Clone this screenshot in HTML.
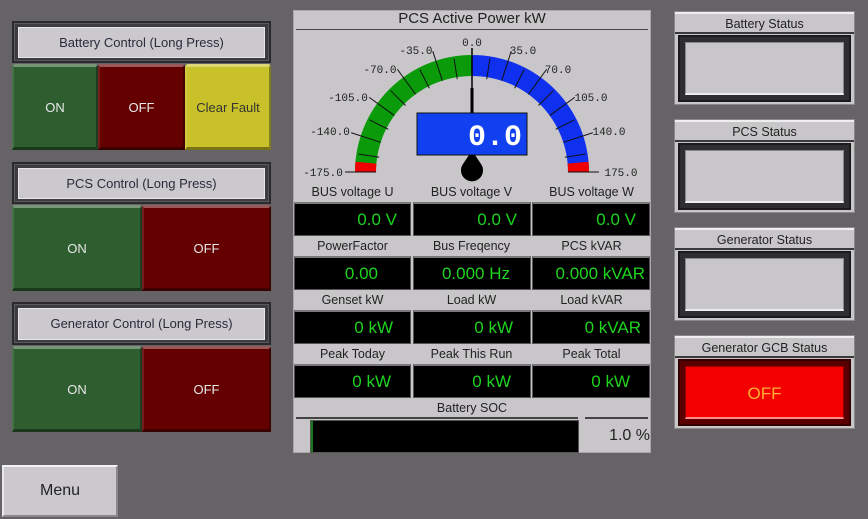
<!DOCTYPE html>
<html><head><meta charset="utf-8"><style>
*{margin:0;padding:0;box-sizing:border-box}
body{width:868px;height:519px;background:#656366;position:relative;overflow:hidden;font-family:"Liberation Sans",sans-serif}
.a{position:absolute}
.hdr{position:absolute;background:#3c3b3e;border:2px solid #2a292b;box-shadow:inset 0 0 0 1px #5a595c}
.hdr div{position:absolute;left:4px;right:4px;top:4px;bottom:3px;background:#cbc9cd;border:1px solid #e8e6ea;font-size:13px;color:#2a2a3a;text-align:center;line-height:29px}
.btn{position:absolute;color:#e8e8e8;font-size:13px;display:flex;align-items:center;justify-content:center;border-top:3px solid rgba(255,255,255,.35);border-left:2px solid rgba(255,255,255,.12);border-right:2px solid rgba(0,0,0,.35);border-bottom:3px solid rgba(0,0,0,.4);border-radius:3px 3px 0 0}
.g{background:#2e5e30}.r{background:#640000}.y{background:#c9c12a;color:#333}
.lbl{position:absolute;font-size:12.5px;color:#222;text-align:center;width:117px}
.box{position:absolute;background:#000;border:1px solid #555;border-top:2px solid #7a787b;color:#1ed41e;font-size:17px;text-align:right;line-height:31px;height:34px}
.st{position:absolute;background:#c8c6c9;border:1px solid #8a888b}
.st .t{position:absolute;left:0;right:0;top:0;height:22px;border-top:2px solid #eee;border-bottom:2px solid #3a393c;font-size:12.5px;color:#222;text-align:center;line-height:20px}
.st .f{position:absolute;left:3px;right:3px;top:23px;bottom:2px;background:#2e2d30;border:2px solid #1a1a1a}
.st .f div{position:absolute;left:5px;right:5px;top:5px;bottom:5px;background:#c8c6c9;border:1px solid #888;border-bottom:2px solid #eee}
</style></head><body>

<!-- left groups -->
<div class="hdr" style="left:12px;top:21px;width:259px;height:42px"><div>Battery Control (Long Press)</div></div>
<div class="btn g" style="left:12px;top:64px;width:86px;height:86px">ON</div>
<div class="btn r" style="left:98px;top:64px;width:87px;height:86px">OFF</div>
<div class="btn y" style="left:185px;top:64px;width:86px;height:86px">Clear Fault</div>

<div class="hdr" style="left:12px;top:162px;width:259px;height:42px"><div>PCS Control (Long Press)</div></div>
<div class="btn g" style="left:12px;top:205px;width:130px;height:86px">ON</div>
<div class="btn r" style="left:142px;top:205px;width:129px;height:86px">OFF</div>

<div class="hdr" style="left:12px;top:302px;width:259px;height:43px"><div>Generator Control (Long Press)</div></div>
<div class="btn g" style="left:12px;top:346px;width:130px;height:86px">ON</div>
<div class="btn r" style="left:142px;top:346px;width:129px;height:86px">OFF</div>

<div class="a" style="left:2px;top:465px;width:116px;height:52px;background:#cbc9cd;border-top:2px solid #f2f2f2;border-left:2px solid #e8e8e8;border-right:2px solid #8a888b;border-bottom:2px solid #8a888b;font-size:16px;color:#222;text-align:center;line-height:48px">Menu</div>

<!-- center panel -->
<div class="a" style="left:293px;top:10px;width:358px;height:443px;background:#c8c6c9;border:1px solid #a9a7aa"></div>
<div class="a" style="left:293px;top:10px;width:358px;text-align:center;font-size:15px;color:#222;line-height:18px">PCS Active Power kW</div>
<div class="a" style="left:296px;top:29px;width:352px;height:1px;background:#444"></div>

<svg class="a" style="left:0;top:0" width="868" height="200" viewBox="0 0 868 200">
<path d="M355,172 A117,117 0 0 1 472,55 L472,76 A96,96 0 0 0 376,172Z" fill="#0a9a0a"/>
<path d="M472,55 A117,117 0 0 1 589,172 L568,172 A96,96 0 0 0 472,76Z" fill="#1030f0"/>
<path d="M355,172 A117,117 0 0 1 355.45,161.8 L376.37,163.6 A96,96 0 0 0 376,172Z" fill="#f00000"/>
<path d="M589,172 A117,117 0 0 0 588.55,161.8 L567.63,163.6 A96,96 0 0 1 568,172Z" fill="#f00000"/>
<g stroke="#111" stroke-width="1">
<line x1="376" y1="172" x2="345" y2="172" transform="rotate(0 472 172)"/>
<line x1="378" y1="172" x2="357" y2="172" transform="rotate(9 472 172)"/>
<line x1="376" y1="172" x2="345" y2="172" transform="rotate(18 472 172)"/>
<line x1="378" y1="172" x2="357" y2="172" transform="rotate(27 472 172)"/>
<line x1="376" y1="172" x2="345" y2="172" transform="rotate(36 472 172)"/>
<line x1="378" y1="172" x2="357" y2="172" transform="rotate(45 472 172)"/>
<line x1="376" y1="172" x2="345" y2="172" transform="rotate(54 472 172)"/>
<line x1="378" y1="172" x2="357" y2="172" transform="rotate(63 472 172)"/>
<line x1="376" y1="172" x2="345" y2="172" transform="rotate(72 472 172)"/>
<line x1="378" y1="172" x2="357" y2="172" transform="rotate(81 472 172)"/>
<line x1="378" y1="172" x2="357" y2="172" transform="rotate(99 472 172)"/>
<line x1="376" y1="172" x2="345" y2="172" transform="rotate(108 472 172)"/>
<line x1="378" y1="172" x2="357" y2="172" transform="rotate(117 472 172)"/>
<line x1="376" y1="172" x2="345" y2="172" transform="rotate(126 472 172)"/>
<line x1="378" y1="172" x2="357" y2="172" transform="rotate(135 472 172)"/>
<line x1="376" y1="172" x2="345" y2="172" transform="rotate(144 472 172)"/>
<line x1="378" y1="172" x2="357" y2="172" transform="rotate(153 472 172)"/>
<line x1="376" y1="172" x2="345" y2="172" transform="rotate(162 472 172)"/>
<line x1="378" y1="172" x2="357" y2="172" transform="rotate(171 472 172)"/>
<line x1="376" y1="172" x2="345" y2="172" transform="rotate(180 472 172)"/>
</g>
<line x1="472" y1="48" x2="472" y2="115" stroke="#000" stroke-width="1.5"/>
<line x1="472" y1="88" x2="472" y2="115" stroke="#000" stroke-width="3"/>
<path d="M469,155 L475,155 L481,164 A11,11 0 1 1 463,164Z" fill="#000"/>
<rect x="417" y="113" width="110" height="42" fill="#1040f0" stroke="#111" stroke-width="1"/>
<text x="522" y="145" text-anchor="end" font-family="Liberation Mono,monospace" font-size="30" font-weight="bold" fill="#fff">0.0</text>
<g font-family="Liberation Mono,DejaVu Sans Mono,monospace" font-size="11" fill="#222">
<text x="472" y="46" text-anchor="middle">0.0</text>
<text x="416" y="54" text-anchor="middle">-35.0</text>
<text x="523" y="54" text-anchor="middle">35.0</text>
<text x="380" y="73" text-anchor="middle">-70.0</text>
<text x="558" y="73" text-anchor="middle">70.0</text>
<text x="348" y="101" text-anchor="middle">-105.0</text>
<text x="591" y="101" text-anchor="middle">105.0</text>
<text x="330" y="135" text-anchor="middle">-140.0</text>
<text x="609" y="135" text-anchor="middle">140.0</text>
<text x="323" y="176" text-anchor="middle">-175.0</text>
<text x="621" y="176" text-anchor="middle">175.0</text>
</g>
<line x1="347" y1="172" x2="355" y2="172" stroke="#111"/>
<line x1="589" y1="172" x2="597" y2="172" stroke="#111"/>
</svg>

<div class="lbl" style="left:294px;top:185px">BUS voltage U</div>
<div class="lbl" style="left:413px;top:185px">BUS voltage V</div>
<div class="lbl" style="left:533px;top:185px">BUS voltage W</div>
<div class="box" style="left:294px;top:202px;width:117px;padding-right:13px">0.0 V</div>
<div class="box" style="left:413px;top:202px;width:118px;padding-right:13px">0.0 V</div>
<div class="box" style="left:532px;top:202px;width:118px;padding-right:13px">0.0 V</div>

<div class="lbl" style="left:294px;top:239px">PowerFactor</div>
<div class="lbl" style="left:413px;top:239px">Bus Freqency</div>
<div class="lbl" style="left:533px;top:239px">PCS kVAR</div>
<div class="box" style="left:294px;top:256px;width:117px;padding-right:32px">0.00</div>
<div class="box" style="left:413px;top:256px;width:118px;padding-right:20px">0.000 Hz</div>
<div class="box" style="left:532px;top:256px;width:118px;padding-right:4px">0.000 kVAR</div>

<div class="lbl" style="left:294px;top:293px">Genset kW</div>
<div class="lbl" style="left:413px;top:293px">Load kW</div>
<div class="lbl" style="left:533px;top:293px">Load kVAR</div>
<div class="box" style="left:294px;top:310px;width:117px;padding-right:17px">0 kW</div>
<div class="box" style="left:413px;top:310px;width:118px;padding-right:17px">0 kW</div>
<div class="box" style="left:532px;top:310px;width:118px;padding-right:8px">0 kVAR</div>

<div class="lbl" style="left:294px;top:347px">Peak Today</div>
<div class="lbl" style="left:413px;top:347px">Peak This Run</div>
<div class="lbl" style="left:533px;top:347px">Peak Total</div>
<div class="box" style="left:294px;top:364px;width:117px;padding-right:19px">0 kW</div>
<div class="box" style="left:413px;top:364px;width:118px;padding-right:19px">0 kW</div>
<div class="box" style="left:532px;top:364px;width:118px;padding-right:19px">0 kW</div>

<div class="a" style="left:294px;top:401px;width:356px;text-align:center;font-size:12.5px;color:#222">Battery SOC</div>
<div class="a" style="left:296px;top:417px;width:282px;height:2px;background:#444"></div>
<div class="a" style="left:585px;top:417px;width:63px;height:2px;background:#444"></div>
<div class="a" style="left:310px;top:420px;width:269px;height:33px;background:#000;border:1px solid #555"><div style="width:2px;height:100%;background:#1a7a1a"></div></div>
<div class="a" style="left:590px;top:427px;width:60px;text-align:right;font-size:16px;color:#222">1.0 %</div>

<!-- right status -->
<div class="st" style="left:674px;top:11px;width:181px;height:94px"><div class="t">Battery Status</div><div class="f"><div></div></div></div>
<div class="st" style="left:674px;top:119px;width:181px;height:94px"><div class="t">PCS Status</div><div class="f"><div></div></div></div>
<div class="st" style="left:674px;top:227px;width:181px;height:94px"><div class="t">Generator Status</div><div class="f"><div></div></div></div>
<div class="st" style="left:674px;top:335px;width:181px;height:94px"><div class="t">Generator GCB Status</div><div class="f" style="background:#5a0000;border-color:#300"><div style="background:#f50000;border-color:#900;border-bottom-color:#f88;color:#ffb030;font-size:17px;text-align:center;line-height:54px">OFF</div></div></div>

</body></html>
